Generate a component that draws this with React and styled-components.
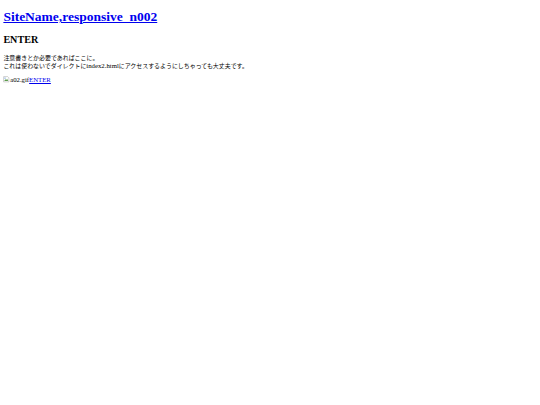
import React from 'react'
import styled, { createGlobalStyle } from 'styled-components'

// page is drawn at 1280 wide and shown at 540 -> everything x 0.421875
const GlobalStyle = createGlobalStyle`
html, body {
  background: #fff;
}
body {
  margin: 3.375px;
  font-family: "Liberation Serif", "Noto Sans CJK JP", serif;
  font-size: 6.75px;
  line-height: 1.15;
  color: #000;
}
a {
  color: #0000ee;
  text-decoration: underline;
}
`

const Header = styled.header``

const SiteTitle = styled.h1`
font-size: 13.5px;
font-weight: bold;
line-height: 1.15;
margin: 6px 0 9.05px;
`

const Heading = styled.h2`
font-size: 10.125px;
font-weight: bold;
line-height: 1.15;
margin: 8.4px 0;
`

const Note = styled.p`
margin: 6.5px 0;
line-height: 7.6px;
`

// japanese runs sit a bit narrower than the latin text
const Ja = styled.span`
font-family: "Noto Sans CJK JP", sans-serif;
font-size: 5.95px;
`

const EnterRow = styled.p`
margin: 7px 0;
line-height: 7.8px;
`

const Broken = styled.span`
color: #000;
svg {
  width: 6.5px;
  height: 6.5px;
  margin-right: 0.3px;
  vertical-align: -0.8px;
}
`

const BrokenIcon = () => (
  <svg viewBox="0 0 16 16">
    <path d="M1.5 1.5h10l3 3v10h-13z" fill="#fff" stroke="#8a8a8a" />
    <path d="M3 12l3-4 2 2 2-3 3 5z" fill="#5c9b4c" />
    <circle cx="5" cy="5" r="1.5" fill="#4a8ad8" />
  </svg>
)

const App = () => {
  return (
    <>
      <GlobalStyle />
      <Header>
        <SiteTitle><a href="#">SiteName,responsive_n002</a></SiteTitle>
      </Header>
      <main>
        <Heading>ENTER</Heading>
        <Note>
          <Ja>注意書きとか必要であればここに。</Ja><br />
          <Ja>これは使わないでダイレクトに</Ja>index2.html<Ja>にアクセスするようにしちゃっても大丈夫です。</Ja>
        </Note>
        <EnterRow>
          <Broken><BrokenIcon />a02.gif</Broken><a href="#">ENTER</a>
        </EnterRow>
      </main>
    </>
  )
}

export default App
